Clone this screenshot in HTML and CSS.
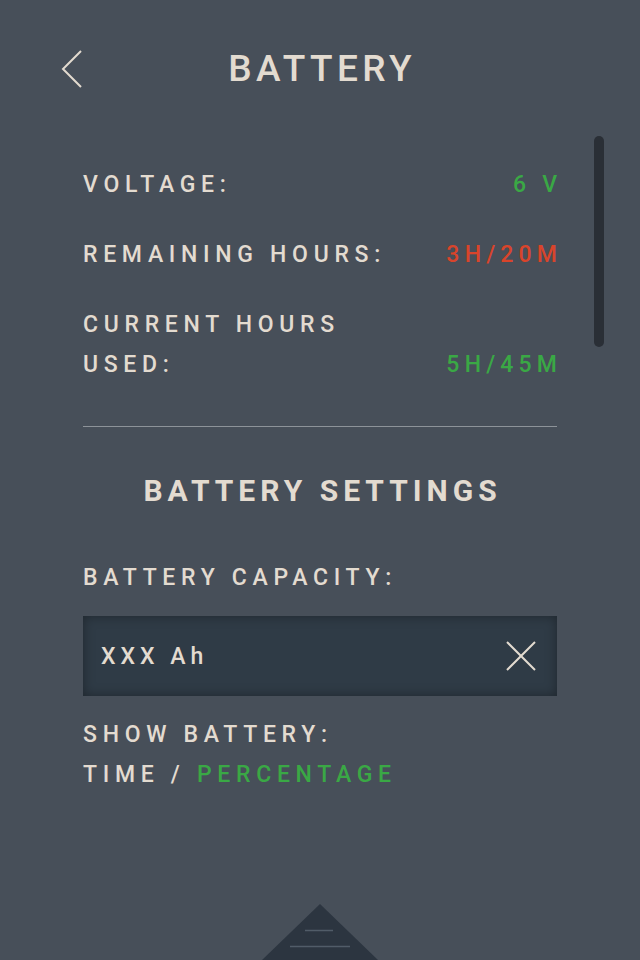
FILE: index.html
```html
<!DOCTYPE html>
<html>
<head>
<meta charset="utf-8">
<link rel="stylesheet" href="styles.css">
</head>
<body>
<div class="screen">
  <header class="header">
    <svg class="back" width="24" height="40" viewBox="0 0 24 40"><polyline points="21,2 3,20 21,38" fill="none" stroke="#e3dbd0" stroke-width="2"/></svg>
    <h1 class="title">BATTERY</h1>
  </header>
  <div class="scrollbar"></div>
  <main class="content">
    <div class="row">
      <span class="label">VOLTAGE:</span>
      <span class="value green">6 V</span>
    </div>
    <div class="row">
      <span class="label">REMAINING HOURS:</span>
      <span class="value red">3H/20M</span>
    </div>
    <div class="row multi">
      <span class="label">CURRENT HOURS<br>USED:</span>
      <span class="value green">5H/45M</span>
    </div>
    <hr class="divider">
    <h2 class="subtitle">BATTERY SETTINGS</h2>
    <div class="label field-label">BATTERY CAPACITY:</div>
    <div class="input">
      <span class="input-text">XXX Ah</span>
      <svg class="clear" width="32" height="32" viewBox="0 0 32 32"><path d="M2 2 L30 30 M30 2 L2 30" stroke="#e3dbd0" stroke-width="2" fill="none"/></svg>
    </div>
    <div class="label show">SHOW BATTERY:<br>TIME / <span class="green">PERCENTAGE</span></div>
  </main>
  <div class="drawer">
    <svg width="116" height="56" viewBox="0 0 116 56"><polygon points="58,0 116,56 0,56" fill="#2c3540"/><line x1="43" y1="26.5" x2="71" y2="26.5" stroke="#515c68" stroke-width="1.5"/><line x1="28" y1="42.5" x2="88" y2="42.5" stroke="#515c68" stroke-width="1.5"/></svg>
  </div>
</div>
</body>
</html>
```
FILE: styles.css
```css
* { box-sizing: border-box; }
html, body { margin: 0; padding: 0; }
body {
  background: #474f59;
  font-family: Roboto, "DejaVu Sans", sans-serif;
  color: #e3dbd0;
}
.screen {
  position: relative;
  width: 640px;
  height: 960px;
  overflow: hidden;
}
.header {
  position: relative;
  height: 135px;
  display: flex;
  justify-content: center;
  padding-top: 44px;
}
.back {
  position: absolute;
  left: 60px;
  top: 49px;
}
.title {
  margin: 0;
  font-size: 37px;
  font-weight: 500;
  letter-spacing: 4.4px;
  line-height: 50px;
  padding-left: 4.4px;
}
.scrollbar {
  position: absolute;
  left: 594px;
  top: 136px;
  width: 10px;
  height: 211px;
  border-radius: 5px;
  background: #2a2f36;
}
.content {
  padding: 0 83px;
}
.label {
  font-size: 23px;
  font-weight: 500;
  letter-spacing: 5.7px;
  line-height: 40px;
}
.value {
  font-size: 23px;
  font-weight: 500;
  letter-spacing: 5.2px;
  line-height: 40px;
  margin-right: -5.2px;
}
.green { color: #3aa845; }
.red { color: #d9442b; }
.row {
  display: flex;
  justify-content: space-between;
  align-items: flex-end;
  height: 70px;
  padding-top: 25px;
}
.row.multi {
  height: auto;
  padding-top: 30px;
}
.divider {
  margin: 41px 0 0;
  border: none;
  height: 1px;
  background: #8d9399;
}
.subtitle {
  margin: 44px 0 0;
  text-align: center;
  font-size: 30px;
  font-weight: 700;
  letter-spacing: 5px;
  line-height: 40px;
  padding-left: 5px;
}
.field-label {
  margin-top: 47px;
}
.input {
  margin-top: 18px;
  height: 80px;
  background: #2f3b46;
  box-shadow: inset 0 0 12px rgba(0,0,0,0.35);
  display: flex;
  align-items: center;
  justify-content: space-between;
  padding: 0 20px 0 18px;
}
.input-text {
  font-size: 23px;
  font-weight: 500;
  letter-spacing: 5px;
}
.show {
  margin-top: 19px;
}
.drawer {
  position: absolute;
  left: 262px;
  top: 904px;
  width: 116px;
  height: 56px;
}
.drawer svg { display: block; }
```
